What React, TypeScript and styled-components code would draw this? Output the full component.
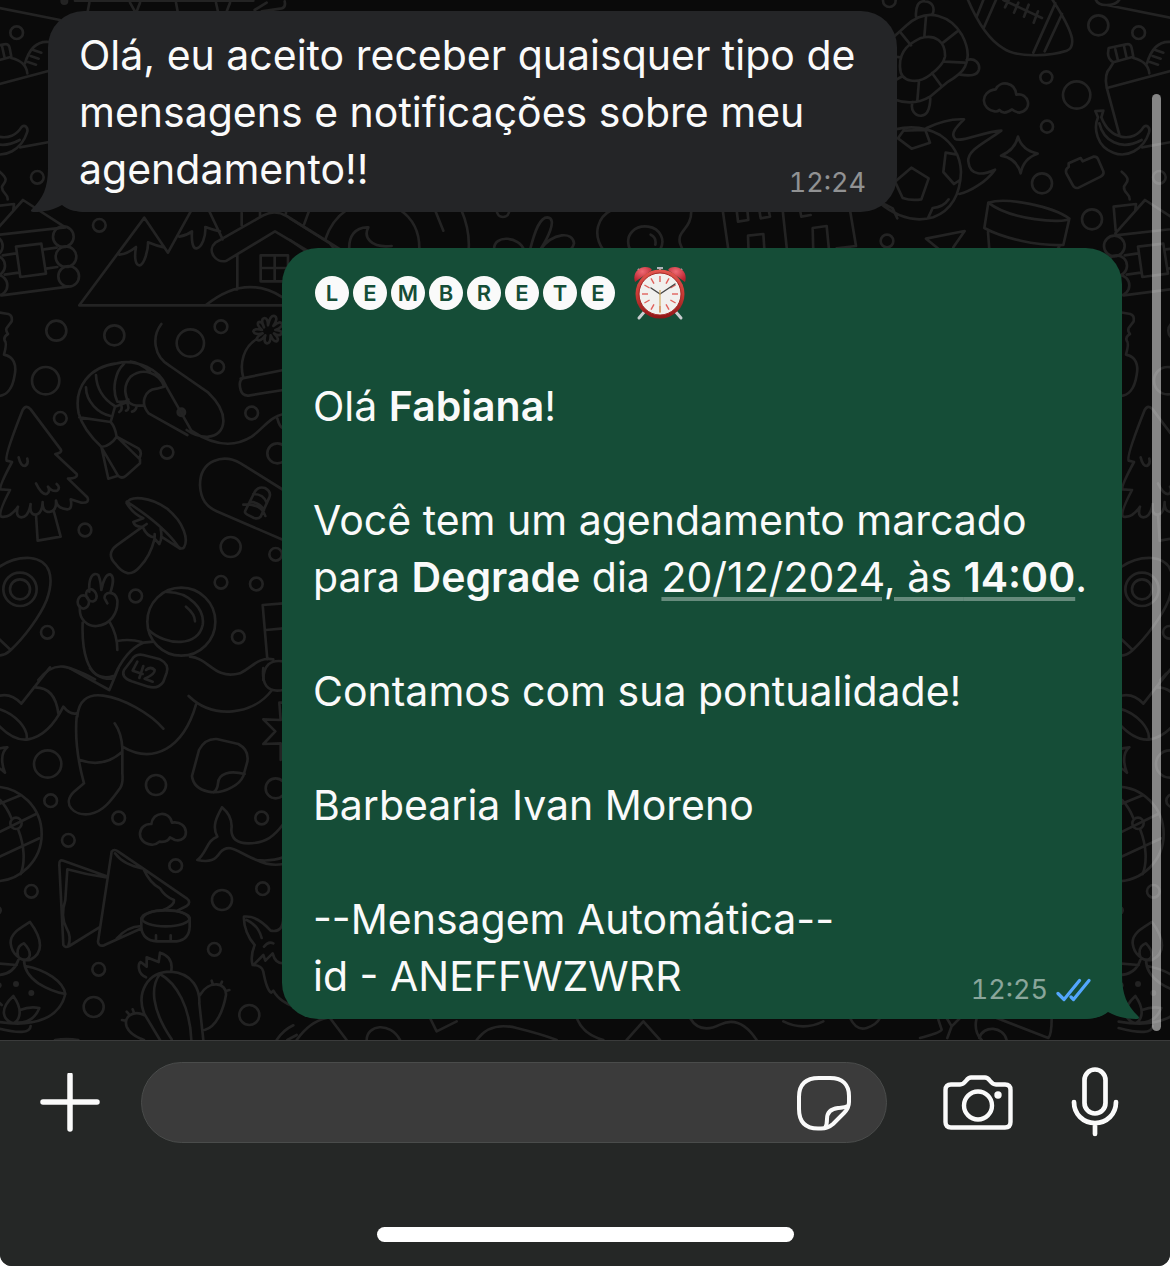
import React from "react";
import styled, { createGlobalStyle } from "styled-components";

const GlobalStyle = createGlobalStyle`
  *, *::before, *::after { box-sizing: border-box; }
  body {
    margin: 0;
    background: #ffffff;
    font-family: Inter, "Liberation Sans", sans-serif;
    -webkit-font-smoothing: antialiased;
  }
`;

/* ---------- layout ---------- */

const Screen = styled.div`
  display: flex;
  flex-direction: column;
  min-height: 100vh;
  overflow: hidden;
  background: #252726;
  border-radius: 0 0 12px 12px;
`;

const Chat = styled.main`
  position: relative;
  flex: 1;
  display: flex;
  flex-direction: column;
  gap: 36px;
  padding: 11px 48px 21px;
  background: #0a0a0a;
  overflow: hidden;
`;

const Wallpaper = styled.svg`
  position: absolute;
  inset: 0;
  width: 100%;
  height: 100%;
  fill: none;
  stroke: #232323;
  stroke-width: 8;
  stroke-linecap: round;
  stroke-linejoin: round;
`;

const ScrollThumb = styled.div`
  position: absolute;
  top: 94px;
  right: 9px;
  bottom: 9px;
  width: 9px;
  border-radius: 5px;
  background: rgba(255, 255, 255, 0.5);
`;

const Bubble = styled.article<{ $out?: boolean }>`
  position: relative;
  isolation: isolate;
  display: grid;
  width: 100%;
  max-width: ${(p) => (p.$out ? 840 : 849)}px;
  align-self: ${(p) => (p.$out ? "flex-end" : "flex-start")};
  padding: 16px 31px 14px;
  border-radius: 36px;
  background: ${(p) => (p.$out ? "#154d37" : "#242527")};
  color: #fafafa;
`;

const Tail = styled.svg<{ $out?: boolean }>`
  position: absolute;
  z-index: -1;
  bottom: 0;
  left: ${(p) => (p.$out ? "auto" : "-18px")};
  right: ${(p) => (p.$out ? "-18px" : "auto")};
  width: 56px;
  height: 52px;
  fill: ${(p) => (p.$out ? "#154d37" : "#242527")};
  transform: ${(p) => (p.$out ? "scaleX(-1)" : "none")};
`;

const Body = styled.div`
  grid-area: 1 / 1;
  font-size: 41px;
  line-height: 57px;
`;

const Line = styled.p`
  margin: 0;
  min-height: 57px;
`;

const Bold = styled.strong`
  font-weight: 600;
`;

const DateLink = styled.a`
  color: inherit;
  text-decoration: underline;
  text-decoration-color: rgba(255, 255, 255, 0.35);
  text-decoration-thickness: 4px;
  text-underline-offset: 5px;
`;

const Meta = styled.footer`
  grid-area: 1 / 1;
  align-self: end;
  justify-self: end;
  display: flex;
  align-items: center;
  gap: 8px;
  font-size: 27px;
  line-height: 30px;
  font-variant-numeric: tabular-nums;
  color: rgba(255, 255, 255, 0.5);
`;

const Heading = styled.h2`
  display: flex;
  align-items: center;
  gap: 18px;
  height: 57px;
  margin: 0;
  padding-left: 2px;
`;

const Badges = styled.span`
  display: flex;
  gap: 4px;
`;

const Badge = styled.span`
  display: grid;
  place-items: center;
  width: 34px;
  height: 34px;
  border-radius: 50%;
  background: #fafafa;
  color: #154d37;
  font-size: 22px;
  line-height: 34px;
  font-weight: 600;
`;

const Composer = styled.footer`
  display: flex;
  flex-direction: column;
  justify-content: space-between;
  gap: 84px;
  padding-bottom: 24px;
  border-top: 1px solid #3a3b3b;
  background: #252726;
`;

const Tools = styled.form`
  display: flex;
  align-items: center;
  padding: 21px 51px 0 40px;
`;

const IconButton = styled.button`
  display: flex;
  flex: none;
  padding: 0;
  border: 0;
  background: none;
  color: #fafafa;
  cursor: pointer;

  svg {
    display: block;
    fill: none;
    stroke: currentColor;
    stroke-linecap: round;
    stroke-linejoin: round;
  }
`;

const Actions = styled.div`
  display: flex;
  flex: none;
  align-items: center;
  gap: 58px;
  margin-left: 56px;
`;

const Field = styled.div`
  display: flex;
  flex: 1;
  min-width: 0;
  align-items: center;
  height: 81px;
  margin-left: 41px;
  padding: 0 34px;
  border: 1px solid #4a4c4b;
  border-radius: 41px;
  background: #3b3b3b;
`;

const TextInput = styled.input`
  flex: 1;
  min-width: 0;
  border: 0;
  outline: 0;
  background: transparent;
  color: #fafafa;
  font: inherit;
  font-size: 41px;
`;

const HomeBar = styled.div`
  align-self: center;
  width: 417px;
  max-width: 60%;
  height: 15px;
  border-radius: 8px;
  background: #ffffff;
`;

/* ---------- wallpaper ---------- */

type Dot = [number, number, number];

const Rings = ({ of }: { of: Dot[] }) => (
  <>
    {of.map(([x, y, r]) => (
      <circle key={`${x}-${y}-${r}`} cx={x} cy={y} r={r} />
    ))}
  </>
);

const TILE = 1122;

const Doodles = () => (
  <>
    <g transform="scale(.33333)">
      <Rings of={[[50, 98, 19], [112, 532, 19], [298, 676, 19], [190, 710, 31], [198, 770, 31], [206, 829, 31], [-23, 738, 31], [-16, 797, 31], [-9, 856, 31]]} />
      <circle cx="193" cy="3" r="8" fill="#232323" />
      <path d="M-80-4Q-74 16-46 15L180 60M-46 15Q-15 15-6-4M225 2H760M268 8L262 40M390 8L408 40L420 8M528 8L534 40M648 8L655 40M690 8L678 40M764 30L800 8M854 4Q858 22 845 25L785 34" />
      {/* loaf and bottle crate */}
      <path d="M75 190Q95 120 148 126M100 150L124 158M92 168L116 176M84 186L108 194M-45 264L148 212M60 442L148 426" />
      {/* log cabin */}
      <path d="M-20 700L69 600L196 682L-20 706M-25 620L42 612L40 630M-25 620L-19 692M8 766L48 760M132 748L170 743M14 824L56 818M138 806L172 801M5 886L205 860M48 740L124 731L138 821L61 831Z" />
      {/* mountains and hut */}
      <path d="M238 916L433 653L504 758L580 620M238 916H850M358 764C380 762 397 750 408 741C402 775 407 795 418 796C432 796 445 750 444 727Q470 738 492 742M626 630L668 718M538 710Q560 706 576 694C574 725 578 746 590 745C605 742 618 710 616 681Q640 690 660 694M725 638V676M780 634V650M858 634V640M712 765V868M617 916Q735 820 848 892M782 766H864V844H782ZM824 766V844M782 804H864M646 728L790 646Q825 628 860 648L1200 860M646 728C620 750 645 792 680 782L825 694L1120 870" />
    </g>
    <g transform="translate(880) scale(.33333)">
      <Rings of={[[28, 2, 19], [655, 76, 30], [499, 232, 18], [590, 285, 41], [501, 380, 18], [486, 550, 30], [636, 658, 30], [21, 723, 19]]} />
      {/* turtle */}
      <path d="M20 130L80 76Q125 35 175 48Q220 60 246 105Q275 160 255 200Q245 222 200 248L150 290Q100 320 40 298M60 200C58 150 90 130 120 115C165 100 197 125 195 170Q190 195 150 225C115 252 60 250 60 200ZM62 98L93 136M138 50L133 110M232 94L190 127M254 188L194 185M186 260L156 219M112 302L117 242M30 250L68 228M30 168L62 172M108 50C106 20 115 2 135 4C158 5 166 25 157 44M260 180C285 172 300 190 297 208C292 228 270 228 240 224M98 306C90 330 105 349 125 347C145 345 150 320 151 296" />
      {/* american football */}
      <path d="M262-5Q310 110 370 145C420 178 520 165 560 152Q580 145 576 115C568 75 525 10 505-20M290 50L312-5M312 82L350-5M526 10L460 158M546 42L494 154M370 0L486 54M388-4L375 22M415 8L402 38M446 14L432 50M474 34L461 68" />
      {/* clouds, star, brick */}
      <path d="M344 334C305 330 296 275 347 268C360 240 405 245 409 284C445 275 462 330 418 338Q404 336 396 328Q372 346 358 330Q352 336 344 334ZM414 410Q425 450 473 461Q430 475 422 520Q410 475 363 467Q405 450 414 410ZM566 490L602 474L608 484L640 470Q650 468 654 477L670 514Q673 524 662 530L596 563Q584 567 578 555L559 520Q555 508 566 501Z" />
      {/* flaming ball */}
      <path d="M45 388Q120 370 180 405Q240 445 243 515Q240 620 160 652Q80 675 0 610M140 384Q200 355 252 358C230 380 210 400 225 416C240 430 310 395 364 392C320 425 260 450 265 485C270 530 310 525 345 509C320 545 270 575 238 582M94 503L146 535L124 598Q95 603 68 594L45 545ZM54 415L95 446L150 428L136 390L70 392ZM197 458L232 464M197 458L190 516L222 552L240 540M5 608L38 625L52 655M145 652L158 624Q190 622 206 598" />
      {/* bottle and bananas */}
      <path d="M686 144L738 133Q752 130 755 144L760 170L700 187Q684 178 684 160ZM706 148L714 182M732 138L740 174M700 188L690 204Q672 222 680 262L718 404M760 174Q805 185 808 220M646 333L670 332L664 352C690 420 760 430 790 382C800 370 812 384 807 398C790 450 740 475 700 458C650 440 640 385 654 352ZM658 370C670 420 720 455 785 420M725 515C755 540 740 545 732 560C730 580 750 580 749 598" />
      {/* jar and paper plane */}
      <path d="M325 608C380 590 520 620 568 656C550 672 390 660 325 608ZM325 608L313 684C370 715 470 738 550 735L568 656M324 696L328 750M538 740L530 750M180 750L138 716L254 693L220 742" />
    </g>
    <g transform="translate(290 190) scale(.33333)">
      <path d="M0 85L120 160L135 180M0 150L50 185M42 104L58 60M105 150Q125 90 170 60M178 180C175 140 195 110 235 112C220 140 240 175 305 168M330 60Q390 100 388 180M435 60L460 122M514 60Q540 120 536 180M620 60C620 88 658 88 658 60M612 180C610 130 690 140 702 180M720 180C735 120 750 82 772 82C805 85 770 150 750 180C790 125 850 125 852 160Q848 175 838 180M940 180C905 130 925 80 965 60M1020 180C1000 130 1040 105 1075 110C1110 115 1128 150 1110 180M1082 134Q1100 142 1096 164M1204 60C1205 120 1160 120 1170 160L1178 180" />
      <path d="M1298 60L1318 200M1340 60L1344 95L1375 90L1372 60M1408 60L1412 85L1440 80L1436 60M1478 60L1492 190M1530 60L1534 80L1562 75M1376 190L1374 137L1420 132L1424 190M1570 190L1568 114L1610 108L1618 190M1680 60L1698 168L1640 175" />
    </g>
    <g transform="translate(0 310) scale(.33333)">
      <Rings of={[[169, 62, 30], [343, 76, 30], [571, 99, 41], [663, 50, 19], [653, 171, 19], [137, 212, 41], [181, 325, 19], [755, 309, 19], [501, 427, 19], [832, 430, 30], [255, 660, 19], [692, 711, 30], [827, 733, 19], [407, 858, 19], [663, 817, 19], [769, 822, 19], [142, 967, 19], [715, 981, 19], [60, 838, 50], [60, 838, 30]]} />
      <circle cx="544" cy="307" r="11" fill="#232323" />
      {/* boot */}
      <path d="M-10 6L25 12Q38 16 35 34L20 54Q16 62 24 72Q10 80 14 92Q22 98 12 134C42 140 50 165 44 195C38 235 20 260-10 258" />
      {/* shrimp */}
      <path d="M484 42C455 80 460 140 510 168L625 248C690 310 680 375 625 380Q590 382 560 360M497 226L574 362Q675 430 755 380C790 355 810 320 850 312M562 375L446 310C420 280 432 240 470 236L492 230C480 190 430 170 392 200C365 230 378 265 388 278C400 290 416 286 430 287M497 226C480 180 410 145 350 160C270 170 220 230 236 310Q250 360 304 410C320 412 340 395 350 380Q345 350 332 336L345 290L385 275M372 161C345 185 335 240 352 275Q375 278 385 268M450 185Q420 158 392 155M288 195C290 240 315 270 344 288M258 232C258 275 295 310 332 318M238 322L332 336M304 410L325 506L354 497L306 415M354 497Q365 508 378 497L420 460V448L350 380L415 415Q428 425 418 446M362 282Q370 298 358 306M382 280Q390 298 378 302M410 288Q408 302 396 305" />
      {/* beanie */}
      <path d="M730 204C718 160 730 110 772 86M722 206L850 180M850 240L750 256Q728 260 722 240Q714 212 730 204M792 52Q780 26 794 24Q804 26 804 46Q810 14 824 18Q836 24 820 48Q842 30 846 42Q848 52 826 60Q850 62 844 72Q836 80 822 70Q840 88 830 94Q820 96 812 76Q812 102 800 100Q790 96 796 76Q780 96 772 90Q766 82 788 70Q764 76 760 64Q762 54 786 60Q768 44 776 36Q786 34 792 52M832 325Q838 350 850 356" />
      {/* pine tree */}
      <path d="M68 300Q78 282 92 298L182 418Q188 428 166 432L230 492Q235 505 204 506L262 562Q270 580 244 578L212 568Q218 598 202 598Q172 596 168 572Q170 604 148 606Q126 606 128 576Q126 614 105 614Q88 612 92 582Q85 622 64 622Q45 620 54 590Q30 625 4 620Q-8 612 30 540L2 538Q-4 530 36 456L20 452Q12 440 68 300M56 442Q62 468 74 468Q86 464 82 446M108 520Q125 555 140 552Q152 545 144 530Q155 545 172 542Q182 532 170 522M108 614L113 692L182 680L162 606" />
      {/* mushroom */}
      <path d="M380 580C390 555 450 560 500 595C555 640 565 690 552 712Q545 720 535 710C500 660 450 620 380 575ZM380 580Q400 612 430 625L400 636Q405 652 428 650L350 706C325 725 330 745 345 760C370 795 395 800 420 770Q450 740 464 686L478 702Q488 685 482 656M428 650Q440 680 464 682L464 672M425 652L440 642M484 680L540 716" />
      {/* mitten */}
      <path d="M850 540L722 460C670 430 600 450 600 525C602 570 620 590 650 604L850 690M736 602L764 546Q775 528 795 534Q815 545 808 562L782 620Q775 628 762 624L742 614Q732 608 736 602M760 552Q790 552 800 578M750 575Q780 578 792 600M730 584Q785 580 796 618" />
      {/* map pin */}
      <path d="M-60 840C-40 790 20 740 90 744C150 750 165 800 140 870C120 920 70 985 30 1022Q10 1040-15 1036M-15 975L32 1020" />
      {/* astronaut */}
      <circle cx="544" cy="935" r="102" />
      <path d="M500 846C570 845 615 900 608 945C595 1010 500 1010 446 960M558 890Q585 912 585 934M240 890C235 930 265 950 290 948C330 945 355 910 352 870C345 840 310 845 314 865L322 880M268 845C265 800 280 785 295 795Q302 810 304 840M304 840C310 810 318 792 330 793C345 800 338 825 332 845M248 938C245 1020 260 1100 320 1106H340Q375 1020 430 998L460 995M330 938Q352 975 352 1020M352 993Q390 986 425 996M115 1110Q150 1065 190 1070Q220 1074 285 1108M570 1040C630 1045 640 1110 720 1090C760 1070 775 1040 820 1048M788 885L850 880M798 960L850 955M788 885L802 1048M850 1054Q790 1045 790 1110" />
      <ellipse cx="250" cy="876" rx="17" ry="20" />
      <ellipse cx="274" cy="856" rx="15" ry="19" transform="rotate(-25 274 856)" />
      <path d="M395 1050Q405 1030 430 1035L480 1048Q508 1062 500 1088L490 1115Q475 1138 445 1130L395 1114Q362 1102 372 1080ZM412 1055L398 1082L428 1092M430 1068L418 1104M438 1080Q452 1068 464 1080Q466 1092 434 1106L458 1115" />
    </g>
    <g transform="translate(0 670) scale(.33333)">
      <Rings of={[[143, 282, 41], [152, 392, 19], [468, 345, 30], [356, 444, 19], [205, 511, 19], [827, 355, 30], [785, 444, 19], [527, 587, 19], [94, 664, 19], [666, 690, 30], [788, 656, 19], [643, 838, 19], [296, 898, 19], [281, 1011, 30], [748, 1035, 30], [-17, 492, 142], [48, 460, 17]]} />
      <g fill="#232323" stroke="none">
        <circle cx="-8" cy="721" r="14" />
        <circle cx="48" cy="942" r="9" />
        <circle cx="94" cy="969" r="9" />
        <circle cx="-4" cy="946" r="9" />
      </g>
      {/* space suit */}
      <path d="M150-8L64 101Q30 65-10 80M102 52Q165 50 175 130M-10 115C50 130 85 180 80 208M-10 160Q40 215 85 208C130 200 165 160 190 110Q210 135 230 130M210-5L328 60L355-5M270-5Q295 32 340 18M232 140C235 95 260 70 310 77C370 85 450 130 490 176M230 140Q222 230 252 340L222 365C185 400 220 440 270 432C310 425 335 390 360 355Q370 340 367 310V235Q365 190 344 160M240 270Q310 295 366 246M367 230C460 285 550 235 588 104M566 78C640 150 760 135 816 60M790-6C785 40 800 70 850 60M850 98H838L842 150L790 148L826 184L790 222L842 220V270" />
      {/* sticker */}
      <path d="M597 240Q615 205 650 207L715 222Q748 240 742 275L730 318Q720 340 695 352Q660 372 625 365Q580 355 576 318ZM734 312C690 300 655 310 654 340Q652 360 640 367" />
      {/* globe */}
      <path d="M-10 405L62 376M-10 490L108 432M-10 564L118 505M0 390Q20 410 34 444M54 477C75 530 75 580 62 612M22 232C0 250 5 285 15 308Q-5 290-15 292M22 232Q5 232-12 240" />
      {/* cloud */}
      <path d="M454 524C405 518 412 460 454 462C458 425 508 420 516 458C570 450 570 520 525 510L510 502Q504 518 478 515Q465 526 454 524Z" />
      {/* whale tail */}
      <path d="M666 412C650 440 635 470 652 500C620 510 620 550 592 570C630 578 645 570 660 548C690 515 715 550 770 570Q810 590 850 582M666 412Q700 440 694 480Q695 520 745 520C800 520 825 495 850 462M770 570Q815 575 850 562" />
      {/* samosas and dip */}
      <path d="M318 618L190 572Q176 568 178 585L190 825Q195 835 208 828L298 772M320 622Q260 615 202 598L196 690Q180 740 200 775Q215 800 205 828M335 545Q342 535 355 545L430 596L560 685Q575 697 560 708L532 722M335 545L294 815Q295 830 312 826L425 775M345 550Q370 585 430 596Q450 640 480 655Q495 680 522 690Q525 705 490 720M350 806Q380 770 424 768M424 745V775Q430 812 470 814H530Q568 808 569 770V745M468 796V812M512 796V812" />
      <ellipse cx="497" cy="745" rx="72" ry="24" />
      <path d="M426 750C430 710 565 710 569 750" />
      {/* oil lamp */}
      <path d="M90 756C130 810 130 850 90 870C60 875 35 850 32 820C30 790 60 775 90 756ZM72 820C100 850 90 870 70 870C48 868 45 830 72 820ZM55 870Q40 915-10 915M72 870Q72 910 115 940Q155 965 196 972C180 1040 110 1075-10 1055M-10 880L50 885M76 888C140 900 190 935 196 972M40 978C70 1020 60 1050 40 1060C10 1050-5 1020 40 978ZM60 1020Q90 1008 118 1014Q100 1060 50 1058M5 1005L-10 990M-10 1074Q90 1100 92 1068M165 1110Q200 1105 235 1110" />
      {/* cactus */}
      <path d="M438 922C410 910 415 880 422 876L440 890V862L476 876L480 848Q520 860 514 902M432 1030C410 970 440 905 512 905C580 910 600 960 598 1000L610 1110M480 912C450 950 455 1020 515 1108M480 912C530 940 570 1010 574 1110M432 1030L480 1110M432 1035C400 1020 370 1040 380 1070Q390 1095 432 1110M600 975C625 930 680 935 678 975C670 1020 650 1070 614 1080M635 932L638 942M666 935L662 944M688 960L678 963M380 1025L388 1034M398 1018L402 1028M366 1050L376 1052" />
      {/* fox */}
      <path d="M850 740Q850 790 812 782Q770 735 732 740C730 770 745 805 764 825Q750 860 758 885Q785 885 790 905Q800 960 814 968L820 962Q840 1000 900 1015M740 750Q775 765 785 804M792 830Q805 812 820 820M765 880L790 855L796 872L818 850Q825 880 850 880M830 1110Q850 1080 880 1066M862 1110L890 1095" />
    </g>
    <g transform="translate(290 1018) scale(.33333)">
      <path d="M20 66Q60 10 110 0M120 0L170 66M230 66C230 20 300 10 330 66M420 0L440 40L500 10M560 66Q600 10 680 30T800 66M860 0Q880 50 940 66M1010 66L1060 10L1110 66M1200 0Q1230 50 1290 20T1400 66M1480 10Q1540 40 1600 10M1680 0Q1700 40 1730 30T1770 0" />
      <path d="M1890 60Q1950 45 1955 35L1945 5M1970 0L1985 25L2010 0M1985 25L1972 60M2060 0Q2050 40 2075 66M2285 0Q2285 50 2275 60L2120 0M2068 60C2080 20 2140 25 2150 66" />
    </g>
  </>
);

const ChatWallpaper = () => (
  <Wallpaper aria-hidden="true">
    <defs>
      <g id="doodles">
        <Doodles />
      </g>
    </defs>
    <use href="#doodles" x={-TILE} />
    <use href="#doodles" />
    <use href="#doodles" x={TILE} />
  </Wallpaper>
);

/* ---------- icons ---------- */

const BubbleTail = ({ out }: { out?: boolean }) => (
  <Tail $out={out} viewBox="0 0 56 52" aria-hidden="true">
    <path d="M18 0V8C18 28 13 38 2 49C0 51 1 52 4 52C14 52 23 50 32 45C38 50 46 52 56 52V0Z" />
  </Tail>
);

const AlarmClock = () => (
  <svg width="54" height="56" viewBox="0 0 54 56" role="img" aria-label="Despertador">
    <defs>
      <linearGradient id="rim" x1="0" y1="0" x2="0" y2="1">
        <stop offset="0" stopColor="#e4564f" />
        <stop offset=".5" stopColor="#c93a35" />
        <stop offset="1" stopColor="#8f1517" />
      </linearGradient>
      <radialGradient id="bell" cx=".45" cy=".3" r=".7">
        <stop offset="0" stopColor="#ef6b74" />
        <stop offset="1" stopColor="#b81f2c" />
      </radialGradient>
    </defs>
    <path d="M12 46L6 53M42 46L48 53" stroke="#c9cdd0" strokeWidth="3" strokeLinecap="round" />
    <path d="M5 4L9 8M49 4L45 8M24 3H30M27 3V8" stroke="#aeb4ba" strokeWidth="2" />
    <path d="M2 17C-1 8 6 2 12 2C16 2 18 3 19 5Z" fill="url(#bell)" />
    <path d="M52 17C55 8 48 2 42 2C38 2 36 3 35 5Z" fill="url(#bell)" />
    <circle cx="27" cy="29" r="24.5" fill="url(#rim)" />
    <circle cx="27" cy="29" r="21" fill="#f1f0ee" stroke="#a32522" strokeWidth="1" />
    {Array.from({ length: 12 }, (_, i) => (
      <path key={i} d="M27 11V17" stroke="#e0605c" strokeWidth="1.4" transform={`rotate(${i * 30} 27 29)`} />
    ))}
    <path d="M27 29L18 23M27 29L42 19" stroke="#444" strokeWidth="1.4" strokeLinecap="round" />
    <path d="M27 25V48" stroke="#d2ae62" strokeWidth="1.2" />
  </svg>
);

const ReadTicks = () => (
  <svg width="35" height="24" viewBox="0 1 35 24" fill="none" stroke="#53a6fd" strokeWidth="3.2" strokeLinecap="round" strokeLinejoin="round" role="img" aria-label="Lida">
    <path d="M2 16.500L8 22.500L23.500 3.500M15 20L17.500 22.500L33 3.500" />
  </svg>
);

const PlusIcon = () => (
  <svg width="60" height="60" viewBox="0 1 60 60" strokeWidth="5.500">
    <path d="M30 4V58M3 31H57" transform="translate(0 -1)" />
  </svg>
);

const StickerIcon = () => (
  <svg width="56" height="56" viewBox="0 0 56 56" strokeWidth="4">
    <path d="M23 3H34C47 3 53 10 53 21V27C53 32 51 35 48 38L37 49C33 52.500 30 53.500 25 53.500H22C9 53.500 3 47 3 34V22C3 9 10 3 23 3Z" />
    <path d="M52 31C48 33 46 32.500 42 33C34 34 31 38 31 44C31 48 31 50 29 53" />
  </svg>
);

const CameraIcon = () => (
  <svg width="70" height="56" viewBox="0 0 70 56" strokeWidth="4.400">
    <path d="M8 9.500H17C23 9.500 23 2.500 28 2.500H42C47 2.500 47 9.500 53 9.500H62Q67.500 9.500 67.500 15V47Q67.500 52.500 62 52.500H8Q2.500 52.500 2.500 47V15Q2.500 9.500 8 9.500Z" />
    <circle cx="35" cy="30.500" r="14" />
    <circle cx="55" cy="20" r="3.700" fill="currentColor" stroke="none" />
  </svg>
);

const MicIcon = () => (
  <svg width="48" height="72" viewBox="0 2 48 72" strokeWidth="4.700">
    <rect x="13.500" y="4.500" width="21" height="44" rx="10.500" />
    <path d="M3 37C3 49 12 58 24 58C36 58 45 49 45 37M24 58V69" />
  </svg>
);

/* ---------- app ---------- */

const Blank = () => <Line aria-hidden="true" />;

export default function App() {
  return (
    <Screen>
      <GlobalStyle />
      <Chat>
        <ChatWallpaper />
        <Bubble>
          <BubbleTail />
          <Body>
            <Line>
              Olá, eu aceito receber quaisquer tipo de
              <br />
              mensagens e notificações sobre meu
              <br />
              agendamento!!
            </Line>
          </Body>
          <Meta>
            <time>12:24</time>
          </Meta>
        </Bubble>
        <Bubble $out>
          <BubbleTail out />
          <Body>
            <Heading>
              <Badges>
                {"LEMBRETE".split("").map((letter, i) => (
                  <Badge key={i}>{letter}</Badge>
                ))}
              </Badges>
              <AlarmClock />
            </Heading>
            <Blank />
            <Line>
              Olá <Bold>Fabiana</Bold>!
            </Line>
            <Blank />
            <Line>
              Você tem um agendamento marcado
              <br />
              para <Bold>Degrade</Bold> dia{" "}
              <DateLink href="#agendamento">
                20/12/2024, às <Bold>14:00</Bold>
              </DateLink>
              .
            </Line>
            <Blank />
            <Line>Contamos com sua pontualidade!</Line>
            <Blank />
            <Line>Barbearia Ivan Moreno</Line>
            <Blank />
            <Line>--Mensagem Automática--</Line>
            <Line>id - ANEFFWZWRR</Line>
          </Body>
          <Meta>
            <time>12:25</time>
            <ReadTicks />
          </Meta>
        </Bubble>
        <ScrollThumb />
      </Chat>
      <Composer>
        <Tools onSubmit={(e) => e.preventDefault()}>
          <IconButton type="button" aria-label="Anexar">
            <PlusIcon />
          </IconButton>
          <Field>
            <TextInput type="text" aria-label="Mensagem" />
            <IconButton type="button" aria-label="Figurinhas">
              <StickerIcon />
            </IconButton>
          </Field>
          <Actions>
            <IconButton type="button" aria-label="Câmera">
              <CameraIcon />
            </IconButton>
            <IconButton type="button" aria-label="Gravar áudio">
              <MicIcon />
            </IconButton>
          </Actions>
        </Tools>
        <HomeBar />
      </Composer>
    </Screen>
  );
}
